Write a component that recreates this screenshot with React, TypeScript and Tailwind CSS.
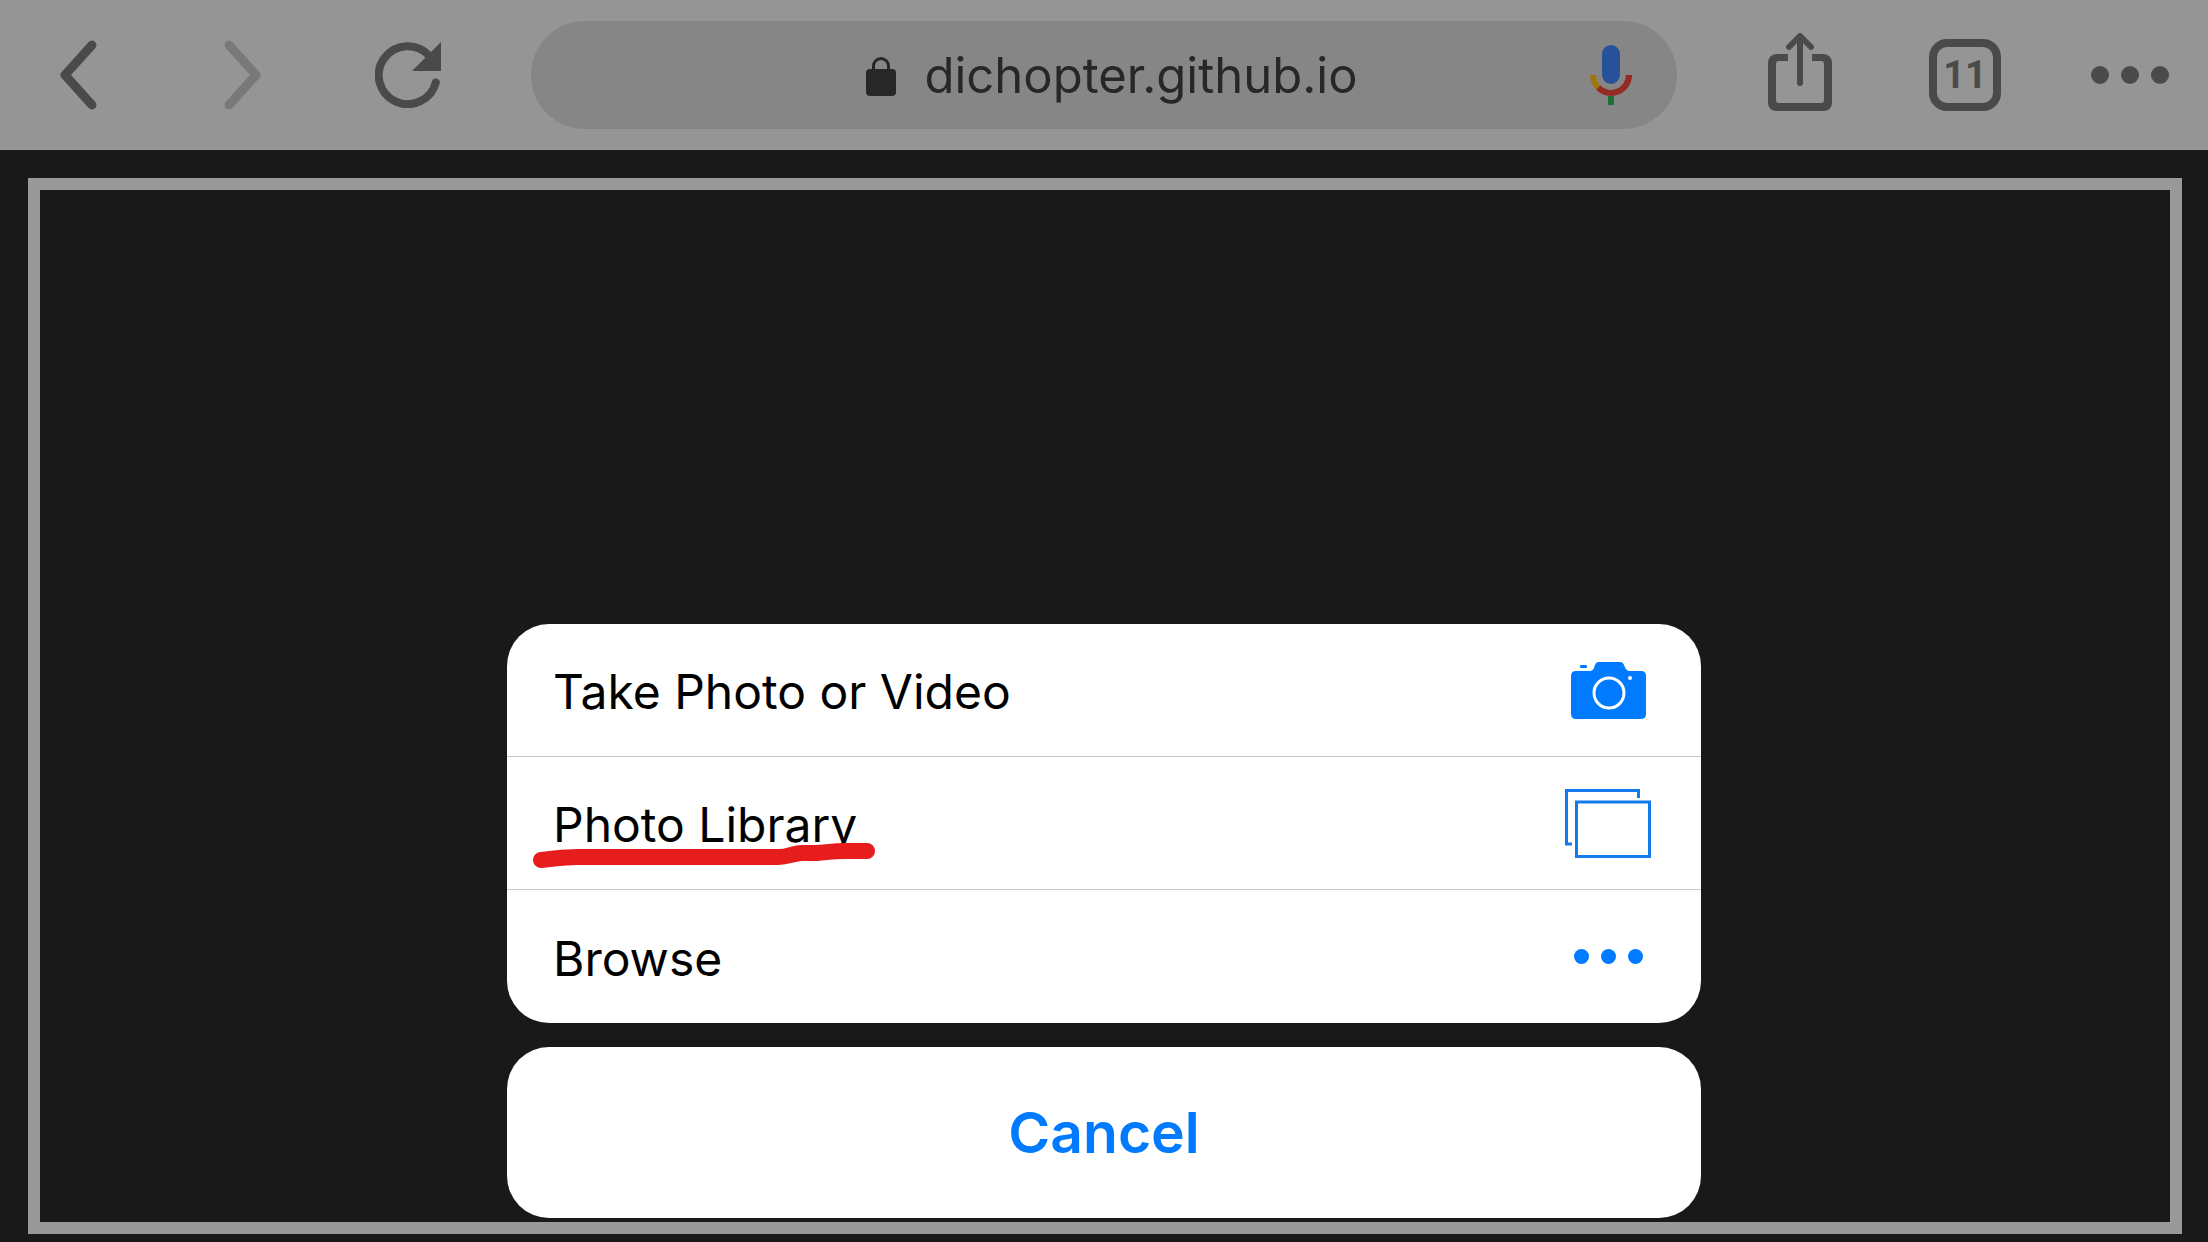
import type { ReactNode } from "react";

function ToolButton({ name, disabled, children }: { name: string; disabled?: boolean; children: ReactNode }) {
  return (
    <button
      type="button"
      aria-label={name}
      className="flex h-full w-[156px] shrink-0 items-center justify-center text-[#4a4a4a] disabled:text-[#797979]"
      disabled={disabled}
    >
      {children}
    </button>
  );
}

function Chevron({ d }: { d: string }) {
  return (
    <svg width="38" height="70" viewBox="0 0 38 70" fill="none" stroke="currentColor" strokeWidth="9" strokeLinecap="round" strokeLinejoin="round">
      <path d={d} />
    </svg>
  );
}

function ReloadIcon() {
  return (
    <svg width="66" height="66" viewBox="0 0 66 66">
      <path d="M54 13.5A29 29 0 1 0 60.8 40.5" fill="none" stroke="currentColor" strokeWidth="8" strokeLinecap="round" />
      <path d="M66 0V29H37Z" fill="currentColor" />
    </svg>
  );
}

function LockIcon() {
  return (
    <svg width="30" height="39" viewBox="0 0 30 39">
      <rect y="12" width="30" height="27" rx="4" fill="currentColor" />
      <path d="M7.5 14V9a7.5 7.5 0 0 1 15 0v5" fill="none" stroke="currentColor" strokeWidth="3" />
    </svg>
  );
}

function MicIcon() {
  return (
    <svg width="42" height="60" viewBox="0 0 42 60" fill="none" strokeWidth="6">
      <rect x="12" width="18" height="39" rx="9" fill="#27529a" />
      <path d="M3 30a18 18 0 0 0 5.3 12.7" stroke="#a0760a" />
      <path d="M8.3 42.7A18 18 0 0 0 39 30" stroke="#952a22" />
      <path d="M21 51v9" stroke="#1f6f35" />
    </svg>
  );
}

function ShareIcon() {
  return (
    <svg width="64" height="84" viewBox="0 0 64 84" fill="none" stroke="currentColor">
      <path
        stroke="none"
        fill="currentColor"
        fillRule="evenodd"
        d="M20 21H9Q0 21 0 31V69Q0 78 9 78H55Q64 78 64 69V31Q64 21 55 21H44V28H53Q56 28 56 31V67Q56 70 53 70H11Q8 70 8 67V31Q8 28 11 28H20Z"
      />
      <path d="M32 50V4M21 14L32 3L43 14" strokeWidth="6" strokeLinecap="round" strokeLinejoin="round" />
    </svg>
  );
}

function CameraIcon() {
  return (
    <svg width="75" height="57" viewBox="0 0 75 57">
      <path d="M5 9H19C22 9 23 6 24 3Q25 0 28 0H49Q52 0 53 3C54 6 56 9 58 9H70Q75 9 75 14V52Q75 57 70 57H5Q0 57 0 52V14Q0 9 5 9Z" fill="#007aff" />
      <rect x="9" y="3" width="7" height="3" rx="1" fill="#007aff" />
      <circle cx="38" cy="31" r="15" fill="none" stroke="#fff" strokeWidth="3" />
      <circle cx="59" cy="16" r="2" fill="#fff" />
    </svg>
  );
}

function PhotosIcon() {
  return (
    <svg width="86" height="69" viewBox="0 0 86 69" fill="none" stroke="#127aea" strokeWidth="3">
      <path d="M7 55H1.5V1.5H73.5V9" />
      <rect x="11.5" y="13" width="73" height="54.5" />
    </svg>
  );
}

function BrowseIcon() {
  return (
    <svg width="69" height="15" viewBox="0 0 69 15" fill="#007aff">
      <circle cx="7.5" cy="7.5" r="7.5" />
      <circle cx="34.5" cy="7.5" r="7.5" />
      <circle cx="61.5" cy="7.5" r="7.5" />
    </svg>
  );
}

function Row({ text, icon, marked }: { text: string; icon: ReactNode; marked?: boolean }) {
  return (
    <button
      type="button"
      className="flex h-[133px] w-full items-center justify-between border-b border-[#c8c8c8] pl-[46px] text-left last:border-b-0"
    >
      <span className="relative pt-1 text-[48px] leading-[60px] text-black">
        {text}
        {marked && (
          <svg
            className="absolute -left-5 top-[52px]"
            width="342"
            height="26"
            viewBox="0 0 342 26"
            fill="none"
            stroke="#e71c1c"
            strokeWidth="16"
            strokeLinecap="round"
            strokeLinejoin="round"
          >
            <path d="M8 17C20 16 29 14 45 14H245C256 14 260 10 269 10H284C296 9 302 8 312 8H334" />
          </svg>
        )}
      </span>
      <span className="flex w-[186px] justify-center">{icon}</span>
    </button>
  );
}

export default function App() {
  return (
    <div className="relative flex h-screen flex-col bg-[#191919] font-[Inter,'Liberation_Sans',sans-serif]">
      <header className="flex h-[150px] shrink-0 items-center gap-[45px] bg-[#959595]">
        <nav aria-label="History" className="flex h-full gap-[9px]">
          <ToolButton name="Back">
            <Chevron d="M33 5L6 35L33 65" />
          </ToolButton>
          <ToolButton name="Forward" disabled>
            <Chevron d="M5 5L32 35L5 65" />
          </ToolButton>
          <ToolButton name="Reload">
            <ReloadIcon />
          </ToolButton>
        </nav>
        <div className="grid h-[108px] min-w-0 flex-1 grid-cols-[1fr_auto_1fr] items-center rounded-full bg-[#868686] text-[#272727]">
          <button type="button" className="col-start-2 flex items-center gap-7 pt-0.5 pl-4 text-[49px] leading-[60px]">
            <LockIcon />
            dichopter.github.io
          </button>
          <button type="button" aria-label="Voice search" className="mr-[45px] justify-self-end">
            <MicIcon />
          </button>
        </div>
        <div className="flex h-full gap-[9px]">
          <ToolButton name="Share">
            <ShareIcon />
          </ToolButton>
          <ToolButton name="Open tabs">
            <span className="flex size-[72px] items-center justify-center rounded-[18px] border-8 border-[#4a4a4a] font-[Roboto,sans-serif] text-[38px] leading-none font-bold">
              11
            </span>
          </ToolButton>
          <ToolButton name="More">
            <svg width="78" height="18" viewBox="0 0 78 18" fill="currentColor">
              <circle cx="9" cy="9" r="9" />
              <circle cx="39" cy="9" r="9" />
              <circle cx="69" cy="9" r="9" />
            </svg>
          </ToolButton>
        </div>
      </header>

      <main className="mt-7 mr-[26px] mb-2 ml-7 flex-1 border-12 border-[#999]" />

      <div role="dialog" aria-label="Choose a source" className="absolute inset-x-0 bottom-6 mx-auto flex w-[1194px] max-w-full flex-col gap-6">
        <div className="overflow-hidden rounded-[42px] bg-white">
          <Row text="Take Photo or Video" icon={<CameraIcon />} />
          <Row text="Photo Library" icon={<PhotosIcon />} marked />
          <Row text="Browse" icon={<BrowseIcon />} />
        </div>
        <button type="button" className="h-[171px] rounded-[42px] bg-white text-[57px] leading-[72px] font-semibold text-[#007aff]">
          Cancel
        </button>
      </div>
    </div>
  );
}
